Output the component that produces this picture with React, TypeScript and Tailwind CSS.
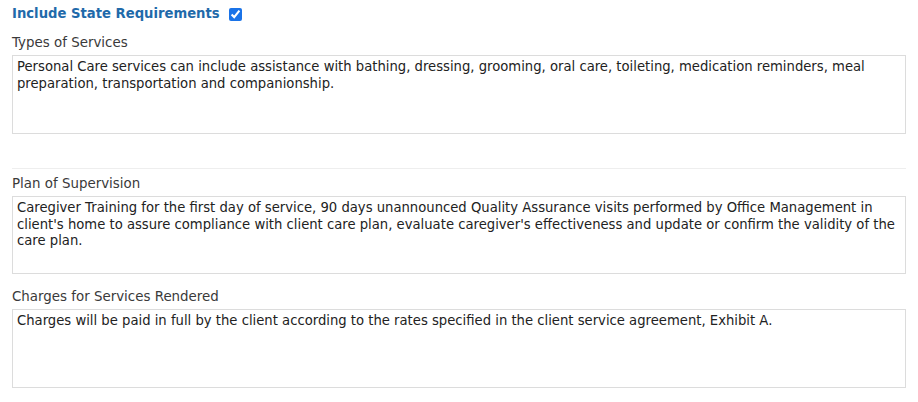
import { useState } from 'react';

interface Section {
  label: string;
  text: string;
  height: string;
}

const sections: Section[] = [
  {
    label: 'Types of Services',
    text: 'Personal Care services can include assistance with bathing, dressing, grooming, oral care, toileting, medication reminders, meal preparation, transportation and companionship.',
    height: 'h-[79px]',
  },
  {
    label: 'Plan of Supervision',
    text: "Caregiver Training for the first day of service, 90 days unannounced Quality Assurance visits performed by Office Management in client's home to assure compliance with client care plan, evaluate caregiver's effectiveness and update or confirm the validity of the care plan.",
    height: 'h-[78px]',
  },
  {
    label: 'Charges for Services Rendered',
    text: 'Charges will be paid in full by the client according to the rates specified in the client service agreement, Exhibit A.',
    height: 'h-[79px]',
  },
];

function Field({ section }: { section: Section }) {
  return (
    <div>
      <div className="text-[13.4px] leading-[16px] text-[#3a3a3a]">{section.label}</div>
      <div
        className={`mt-[4px] ${section.height} border border-[#dcdcdc] px-[4px] pt-[3px] text-[13.2px] leading-[16.5px] text-[#222]`}
      >
        {section.text}
      </div>
    </div>
  );
}

export default function App() {
  const [checked, setChecked] = useState(true);

  return (
    <div className="bg-white w-[918px] h-[402px]" style={{ fontFamily: '"DejaVu Sans", Verdana, sans-serif' }}>
      <div className="w-[894px] ml-[12px] pt-[5px]">
        {/* Titre + case à cocher */}
        <div className="flex items-center gap-[9px] h-[18px]">
          <span className="text-[13.2px] font-bold text-[#1f6aaa]">Include State Requirements</span>
          <input
            type="checkbox"
            checked={checked}
            onChange={(e) => setChecked(e.target.checked)}
            className="w-[13px] h-[13px] accent-[#1a73e8] m-0"
          />
        </div>

        <div className="mt-[12px]">
          <Field section={sections[0]} />
        </div>

        <div className="mt-[34px] border-t border-[#eeeeee]" />

        <div className="mt-[7px]">
          <Field section={sections[1]} />
        </div>

        <div className="mt-[15px]">
          <Field section={sections[2]} />
        </div>
      </div>
    </div>
  );
}
